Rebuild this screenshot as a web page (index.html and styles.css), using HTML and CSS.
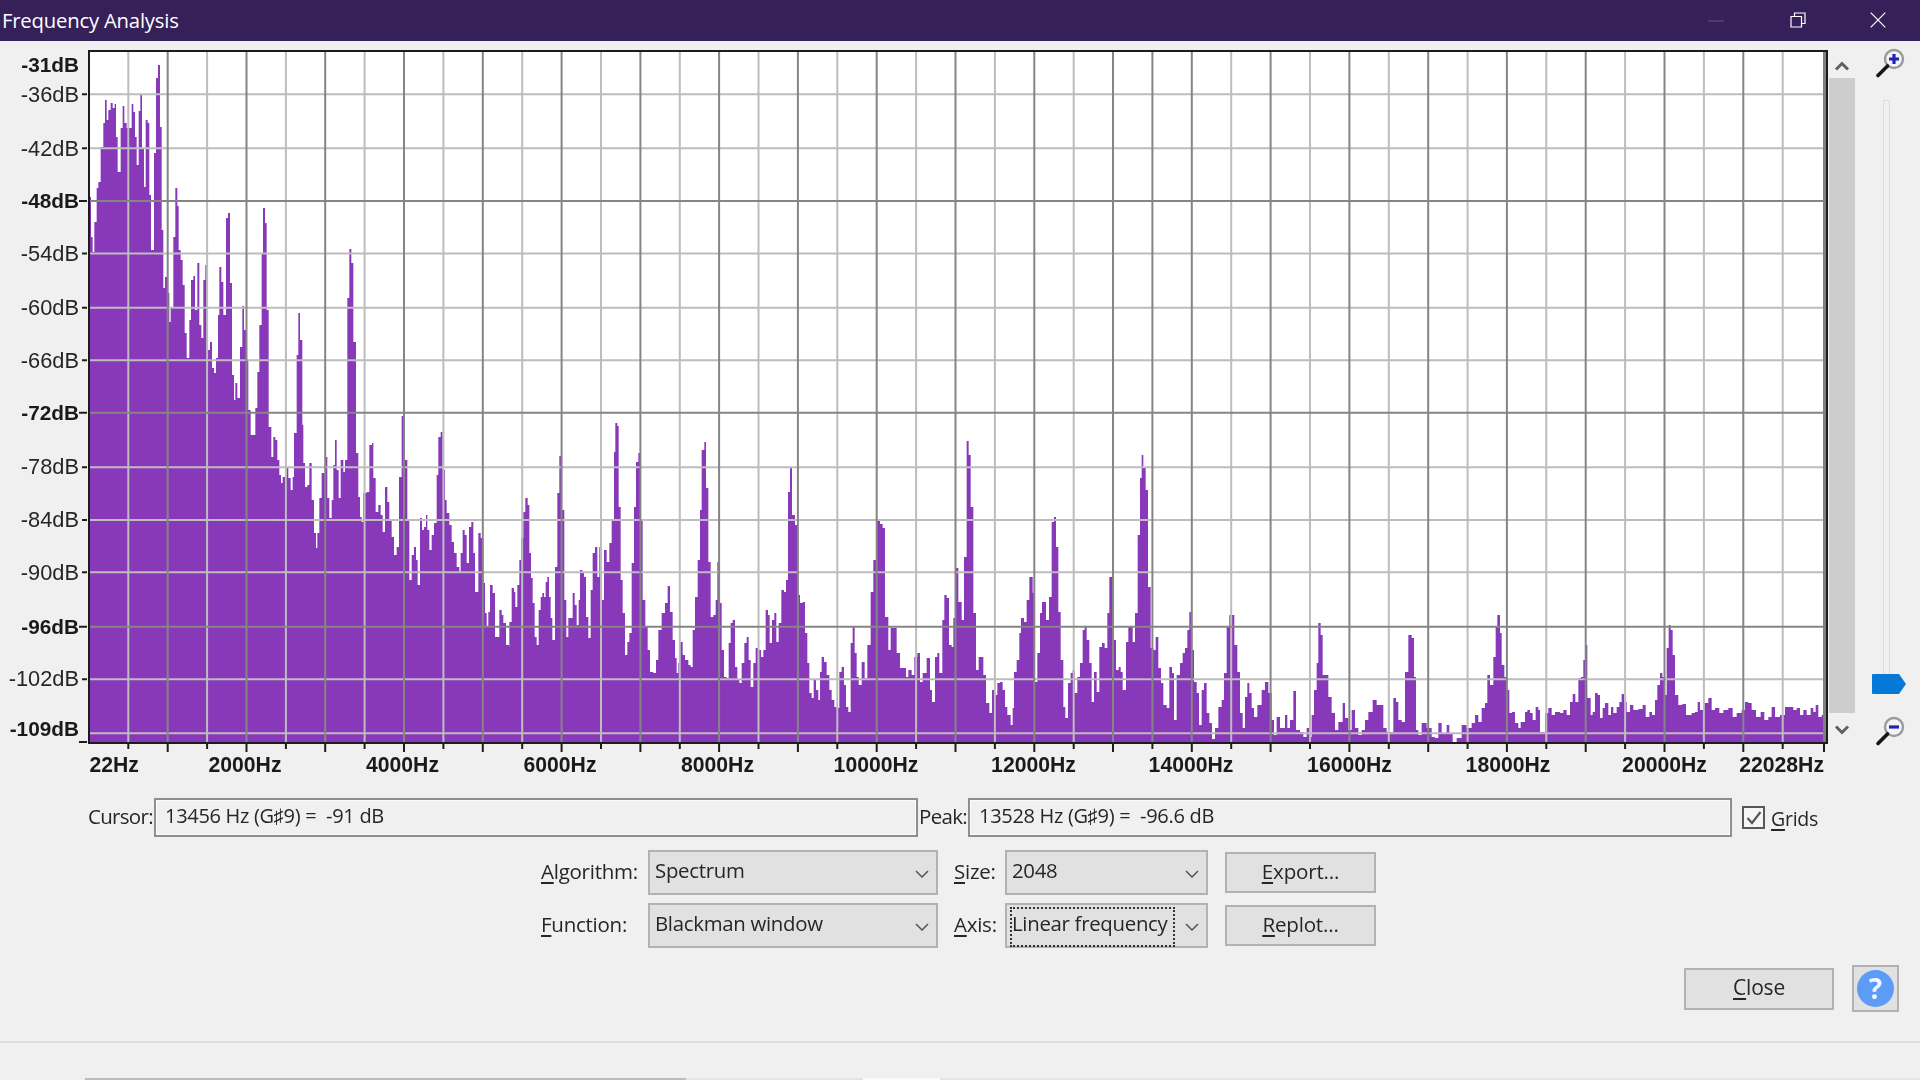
FILE: index.html
```html
<!DOCTYPE html>
<html lang="en">
<head>
<meta charset="utf-8">
<title>Frequency Analysis</title>
<link rel="stylesheet" href="styles.css">
</head>
<body>
<div class="window">
  <header class="titlebar">
    <span class="title">Frequency Analysis</span>
    <div class="winbtns">
      <svg class="wb-min" width="16" height="2" viewBox="0 0 16 2"><path d="M0 1H16" stroke="#5f4c82" stroke-width="1.2"/></svg>
      <svg class="wb-max" width="16" height="16" viewBox="0 0 16 16"><path d="M1 4.5H11.5V15H1ZM4.5 4.5V1H15V11.5H11.5" fill="none" stroke="#fff" stroke-width="1.2"/></svg>
      <svg class="wb-close" width="16" height="16" viewBox="0 0 16 16"><path d="M.7.7L15.3 15.3M15.3.7L.7 15.3" fill="none" stroke="#fff" stroke-width="1.2"/></svg>
    </div>
  </header>

  <section class="chart-row">
    <svg class="plot" width="1828" height="757" viewBox="0 41 1828 757">
      <rect x="89" y="51" width="1737" height="692" fill="#fff"/>
      <g class="spectrum">
        <path transform="translate(80 0) scale(.33333 1)" d="M25 743V197H33V237H38V252H43V222H50V188H55V182H62V147H70V123H75V100H80V120H85V110H92V103H98V108H104V104H108V137H113V172H122V128H128V106H133V123H140V128H155V104H160V112H165V137H170V165H176V111H181V95H186V148H192V187H197V120H203V123H208V195H213V250H222V153H228V78H234V65H240V127H245V230H250V288H255V277H262V293H268V322H272V307H280V237H286V188H292V206H296V250H302V260H308V285H314V333H320V358H328V320H333V280H340V276H345V310H352V263H358V325H364V338H370V280H376V265H381V350H390V342H396V368H402V373H408V358H414V315H418V267H424V282H430V315H438V218H444V213H450V283H456V375H462V400H466V383H472V398H480V347H487V306H492V330H498V360H505V410H512V435H526V408H532V372H538V325H545V253H549V208H555V223H560V310H566V427H574V457H580V437H586V440H592V743Z"/>
        <path transform="translate(270 0) scale(.33333 1)" d="M20 743V460H28V475H33V483H38V477H45V475H50V468H55V478H62V490H68V477H72V433H80V355H85V313H90V340H97V425H100V463H105V487H112V485H118V463H125V500H132V533H138V548H142V533H148V498H155V473H165V457H172V498H178V518H185V500H190V465H195V440H200V470H206V498H212V460H220V472H225V460H232V298H238V249H244V263H250V342H258V453H265V497H270V517H275V522H280V493H290V492H298V445H306V443H310V478H317V512H325V505H332V515H338V532H345V487H352V502H358V520H365V537H372V555H380V547H387V477H395V416H405V460H412V520H418V580H425V555H432V547H438V560H443V585H450V518H456V530H462V527H468V515H472V530H478V550H485V535H492V523H500V475H505V437H512V432H518V470H525V500H530V513H538V525H545V542H552V553H560V567H568V572H572V553H578V530H584V535H590V563H597V527H604V522H610V553H615V592H625V533H632V538H640V583H645V613H650V627H655V612H660V585H668V593H675V637H688V610H695V615H700V623H708V645H718V647H722V743Z"/>
        <path transform="translate(500 0) scale(.33333 1)" d="M28 743V622H35V588H42V592H46V607H52V585H58V560H63V538H70V512H76V498H83V505H88V553H93V578H98V603H104V637H110V645H116V610H122V597H127V593H132V597H137V582H142V577H147V597H152V618H157V640H165V567H172V493H178V456H186V510H193V600H199V637H205V618H218V593H224V605H230V625H236V600H240V570H247V572H252V577H258V617H265V638H272V590H278V553H285V547H292V577H298V547H305V600H312V550H320V562H328V543H335V520H342V452H346V423H352V426H356V507H362V580H368V613H375V655H382V642H388V633H395V563H402V507H408V462H415V453H420V520H428V600H436V627H443V650H450V672H460V673H468V660H475V630H485V613H495V603H503V586H510V612H518V640H525V658H530V673H535V663H540V642H548V655H555V660H565V665H572V667H578V630H585V597H593V560H600V510H605V450H613V442H618V488H625V562H632V617H640V615H647V600H652V562H660V603H665V650H672V677H680V678H686V643H692V623H698V620H705V667H712V680H718V683H725V663H733V643H740V637H746V660H752V687H760V663H767V648H775V650H783V657H790V650H797V610H804V615H809V643H816V620H823V613H829V642H836V623H844V590H852V592H858V580H864V492H870V468H876V515H885V525H893V595H900V603H908V602H915V633H922V663H928V693H935V698H941V680H948V690H955V700H960V672H965V657H972V662H980V675H988V690H995V700H1003V707H1010V708H1018V672H1025V667H1032V685H1038V707H1045V712H1052V643H1058V627H1064V653H1070V677H1076V685H1085V662H1094V678H1102V645H1112V592H1120V560H1130V520H1140V524H1148V528H1155V617H1165V650H1172V628H1180V628H1190V653H1200V668H1218V677H1225V670H1235V675H1243V657H1252V653H1260V682H1268V673H1280V658H1290V690H1296V702H1305V657H1312V653H1318V673H1327V620H1333V595H1340V598H1347V645H1355V647H1360V618H1367V568H1375V602H1385V620H1392V557H1400V441H1406V455H1412V507H1420V613H1428V670H1436V657H1450V675H1458V703H1468V713H1476V690H1485V695H1492V683H1500V743Z"/>
        <path transform="translate(1000 0) scale(.33333 1)" d="M0 743V682H8V690H15V707H22V715H32V725H38V708H42V672H50V660H58V633H63V618H72V622H80V600H88V577H98V593H105V682H112V653H120V613H126V602H138V620H147V597H155V522H162V517H168V547H175V612H182V660H190V707H196V718H204V683H212V673H218V670H224V693H232V677H240V663H248V630H254V627H260V640H268V663H275V702H282V672H290V692H298V647H306V643H314V648H322V613H328V577H340V640H348V670H356V667H362V672H368V690H378V642H385V627H398V642H405V613H413V535H420V478H425V455H430V468H437V490H444V587H452V648H460V650H467V637H475V668H483V683H490V705H500V708H508V667H516V673H522V720H530V675H540V663H548V653H555V648H562V630H568V612H575V650H582V682H590V693H597V725H605V690H612V683H620V713H628V723H636V739H645V728H655V707H665V700H672V673H680V627H688V615H703V645H712V672H720V713H728V728H735V697H742V683H748V693H755V708H762V717H772V705H785V690H795V682H805V693H815V720H822V735H830V717H840V728H855V715H862V728H870V720H880V691H888V730H900V732H910V737H920V728H928V737H935V715H942V690H950V663H955V623H962V635H968V675H985V697H995V713H1005V730H1015V722H1028V703H1035V718H1045V730H1055V710H1065V728H1075V735H1085V730H1095V720H1105V712H1118V700H1130V705H1150V728H1160V732H1180V698H1188V702H1195V720H1205V722H1215V672H1225V635H1235V638H1242V677H1248V730H1255V735H1265V723H1280V728H1295V737H1305V738H1315V723H1325V733H1340V725H1348V733H1358V742H1370V738H1385V725H1400V728H1415V723H1425V715H1435V722H1445V708H1455V703H1462V675H1470V685H1480V657H1487V627H1492V615H1500V743Z"/>
        <path transform="translate(1450 0) scale(.33333 1)" d="M148 743V633H155V665H163V677H170V690H178V713H186V712H195V723H205V728H212V722H225V712H232V710H240V713H248V720H257V707H265V710H270V732H285V713H295V708H305V715H315V712H330V713H340V710H350V715H360V702H368V694H376V702H385V678H393V677H400V660H405V645H412V698H422V715H428V712H435V693H443V695H450V718H458V708H465V703H475V715H483V707H490V713H500V707H508V702H515V694H522V702H530V712H540V705H550V710H565V709H578V705H587V717H598V712H606V715H615V700H622V685H630V673H637V677H643V695H650V648H656V625H662V630H668V655H675V695H685V705H697V704H708V715H725V713H735V712H743V702H750V710H762V703H775V698H785V710H795V708H808V713H820V710H835V708H848V717H860V713H875V710H885V702H895V703H905V710H918V717H932V712H943V720H955V717H965V707H975V717H990V715H1005V707H1030V710H1040V708H1050V715H1060V710H1070V715H1082V708H1090V712H1097V705H1105V717H1115V715H1119V743Z"/>
      </g>
      <path class="grid-light" d="M128.3 51V743M207.1 51V743M285.9 51V743M364.6 51V743M443.4 51V743M522.2 51V743M601 51V743M679.8 51V743M758.5 51V743M837.3 51V743M916.1 51V743M994.9 51V743M1073.7 51V743M1231.2 51V743M1310 51V743M1388.8 51V743M1467.6 51V743M1546.3 51V743M1625.1 51V743M1703.9 51V743M1782.7 51V743M89 94.3H1824M89 148.3H1824M89 253.5H1824M89 307.7H1824M89 360.3H1824M89 467.3H1824M89 520H1824M89 572.3H1824M89 679.3H1824M89 733.3H1824"/>
      <path class="grid-dark" d="M167.7 51V743M246.5 51V743M325.2 51V743M404 51V743M482.8 51V743M561.6 51V743M640.4 51V743M719.1 51V743M797.9 51V743M876.7 51V743M955.5 51V743M1034.3 51V743M1113 51V743M1152.4 51V743M1191.8 51V743M1270.6 51V743M1349.4 51V743M1428.2 51V743M1506.9 51V743M1585.7 51V743M1664.5 51V743M1743.3 51V743M89 201H1824M89 412.7H1824M89 626.7H1824"/>
      <path class="plot-frame" d="M89 51H1827V743H89Z"/>
      <path class="plot-edge" d="M1824.5 52V742"/>
      <path class="ticks" d="M82 94.3H87M82 148.3H87M79 201H87M82 253.5H87M82 307.7H87M82 360.3H87M79 412.7H87M82 467.3H87M82 520H87M82 572.3H87M79 626.7H87M82 679.3H87M79 742H87M128.3 744V749M167.7 744V752M207.1 744V749M246.5 744V752M285.9 744V749M325.2 744V752M364.6 744V749M404 744V752M443.4 744V749M482.8 744V752M522.2 744V749M561.6 744V752M601 744V749M640.4 744V752M679.8 744V749M719.1 744V752M758.5 744V749M797.9 744V752M837.3 744V749M876.7 744V752M916.1 744V749M955.5 744V752M994.9 744V749M1034.3 744V752M1073.7 744V749M1113 744V752M1152.4 744V749M1191.8 744V752M1231.2 744V749M1270.6 744V752M1310 744V749M1349.4 744V752M1388.8 744V749M1428.2 744V752M1467.6 744V749M1506.9 744V752M1546.3 744V749M1585.7 744V752M1625.1 744V749M1664.5 744V752M1703.9 744V749M1743.3 744V752M1782.7 744V749M1824 744V752"/>
      <g class="ylabels">
        <text class="b" x="79" y="71.5">-31dB</text>
        <text x="79" y="101.5">-36dB</text>
        <text x="79" y="156">-42dB</text>
        <text class="b" x="79" y="208">-48dB</text>
        <text x="79" y="260.5">-54dB</text>
        <text x="79" y="314.5">-60dB</text>
        <text x="79" y="367.5">-66dB</text>
        <text class="b" x="79" y="420">-72dB</text>
        <text x="79" y="474">-78dB</text>
        <text x="79" y="527">-84dB</text>
        <text x="79" y="579.5">-90dB</text>
        <text class="b" x="79" y="634">-96dB</text>
        <text x="79" y="686">-102dB</text>
        <text class="b" x="79" y="735.5">-109dB</text>
      </g>
      <g class="xlabels">
        <text class="start" x="89.5" y="772">22Hz</text>
        <text x="245" y="772">2000Hz</text>
        <text x="402.5" y="772">4000Hz</text>
        <text x="560" y="772">6000Hz</text>
        <text x="717.5" y="772">8000Hz</text>
        <text x="876" y="772">10000Hz</text>
        <text x="1033.5" y="772">12000Hz</text>
        <text x="1191" y="772">14000Hz</text>
        <text x="1349.5" y="772">16000Hz</text>
        <text x="1508" y="772">18000Hz</text>
        <text x="1664.5" y="772">20000Hz</text>
        <text class="end" x="1824" y="772">22028Hz</text>
      </g>
    </svg>

    <div class="vscroll">
      <svg class="chev-up" width="16" height="10" viewBox="0 0 16 10"><path d="M2 8.5L8 2.5L14 8.5" fill="none" stroke="#606060" stroke-width="3"/></svg>
      <div class="vscroll-thumb"></div>
      <svg class="chev-down" width="16" height="10" viewBox="0 0 16 10"><path d="M2 1.5L8 7.5L14 1.5" fill="none" stroke="#606060" stroke-width="3"/></svg>
    </div>

    <div class="zoom-col">
      <svg class="zoom-ic zoom-in" width="34" height="32" viewBox="0 0 34 32">
        <circle cx="21" cy="12" r="9" fill="#f4f4f4" stroke="#9a9a9a" stroke-width="2.4"/>
        <path d="M14.5 19L5 28.5" stroke="#151515" stroke-width="3.6" stroke-linecap="round"/>
        <path d="M21 7V17M16 12H26" stroke="#2222b4" stroke-width="3.2"/>
      </svg>
      <div class="slider">
        <div class="slider-track"></div>
        <svg class="slider-thumb" width="34" height="20" viewBox="0 0 34 20"><path d="M0 1Q0 0 1 0H27L34 10L27 20H1Q0 20 0 19Z" fill="#0678d8"/></svg>
      </div>
      <svg class="zoom-ic zoom-out" width="34" height="32" viewBox="0 0 34 32">
        <circle cx="21" cy="12" r="9" fill="#f4f4f4" stroke="#9a9a9a" stroke-width="2.4"/>
        <path d="M14.5 19L5 28.5" stroke="#151515" stroke-width="3.6" stroke-linecap="round"/>
        <path d="M16 12H26" stroke="#2222b4" stroke-width="3.2"/>
      </svg>
    </div>
  </section>

  <section class="readouts">
    <label class="lbl lbl-cursor">Cursor:</label>
    <div class="readout">13456 Hz (G♯9) =&nbsp; -91 dB</div>
    <label class="lbl lbl-peak">Peak:</label>
    <div class="readout">13528 Hz (G♯9) =&nbsp; -96.6 dB</div>
    <span class="check"><svg width="18" height="18" viewBox="0 0 18 18"><path d="M2.5 9L7 14L15.5 3" fill="none" stroke="#555" stroke-width="2.2"/></svg></span>
    <label class="lbl lbl-grids"><u>G</u>rids</label>
  </section>

  <section class="options">
    <label class="lbl"><u>A</u>lgorithm:</label>
    <div class="select"><span class="sel-text">Spectrum</span><svg class="chev" width="14" height="8" viewBox="0 0 14 8"><path d="M1 1L7 7L13 1" fill="none" stroke="#555" stroke-width="1.5"/></svg></div>
    <label class="lbl lbl-right"><u>S</u>ize:</label>
    <div class="select"><span class="sel-text">2048</span><svg class="chev" width="14" height="8" viewBox="0 0 14 8"><path d="M1 1L7 7L13 1" fill="none" stroke="#555" stroke-width="1.5"/></svg></div>
    <button class="btn btn-opt"><u>E</u>xport...</button>

    <label class="lbl"><u>F</u>unction:</label>
    <div class="select"><span class="sel-text">Blackman window</span><svg class="chev" width="14" height="8" viewBox="0 0 14 8"><path d="M1 1L7 7L13 1" fill="none" stroke="#555" stroke-width="1.5"/></svg></div>
    <label class="lbl lbl-right"><u>A</u>xis:</label>
    <div class="select select-focus"><span class="sel-text">Linear frequency</span><svg class="chev" width="14" height="8" viewBox="0 0 14 8"><path d="M1 1L7 7L13 1" fill="none" stroke="#555" stroke-width="1.5"/></svg></div>
    <button class="btn btn-opt"><u>R</u>eplot...</button>
  </section>

  <section class="footer">
    <button class="btn btn-close"><u>C</u>lose</button>
    <button class="btn-help"><span class="help-dot">?</span></button>
  </section>

  <div class="statusbar"></div>
  <div class="taskstrip">
    <span class="ts ts-a"></span><span class="ts ts-b"></span><span class="ts ts-c"></span><span class="ts ts-d"></span><span class="ts ts-e"></span>
  </div>
</div>
</body>
</html>
```

FILE: styles.css
```css
* { box-sizing: border-box; }
html, body { margin: 0; padding: 0; }
body {
  width: 1920px;
  height: 1080px;
  overflow: hidden;
  background: #f0f0f0;
  font-family: "Open Sans", "Noto Sans", sans-serif;
  color: #262626;
}
.window { display: flex; flex-direction: column; width: 1920px; height: 1080px; filter: blur(.4px); }

.titlebar {
  height: 41px;
  flex: none;
  background: #35205a;
  display: flex;
  align-items: center;
  justify-content: space-between;
  color: #fff;
}
.title { padding-left: 2px; font-size: 20.3px; letter-spacing: -.2px; line-height: 41px; }
.winbtns { display: flex; align-items: center; }
.wb-min { margin-right: 66px; }
.wb-max { margin-right: 64px; margin-top: -2px; }
.wb-close { margin-right: 34px; margin-top: -2px; }

.chart-row { display: flex; height: 757px; flex: none; }
.plot { flex: none; display: block; }
.spectrum path { fill: #8739ba; }
.grid-light { fill: none; stroke: #bdbdbd; stroke-width: 2; }
.grid-dark { fill: none; stroke: #858585; stroke-width: 2; }
.plot-frame { fill: none; stroke: #1c1c1c; stroke-width: 2; }
.plot-edge { fill: none; stroke: #808080; stroke-width: 3; }
.ticks { fill: none; stroke: #1c1c1c; stroke-width: 2; }
.ylabels text { font: 21.8px "Liberation Sans", sans-serif; fill: #262626; text-anchor: end; }
.ylabels .b { font-size: 20.8px; font-weight: 700; fill: #1a1a1a; }
.xlabels text { font: 700 21.2px "Liberation Sans", sans-serif; fill: #1a1a1a; text-anchor: middle; }
.xlabels .start { text-anchor: start; }
.xlabels .end { text-anchor: end; }

.vscroll { width: 26px; margin-left: 1px; flex: none; display: flex; flex-direction: column; align-items: center; }
.chev-up { margin-top: 20px; margin-bottom: 7px; flex: none; }
.vscroll-thumb { width: 26px; height: 635px; background: #cdcdcd; flex: none; }
.chev-down { margin-top: 12px; flex: none; }

.zoom-col { width: 65px; flex: none; display: flex; flex-direction: column; padding-left: 21px; }
.zoom-ic { display: block; flex: none; margin-left: -3px; }
.zoom-in { margin-top: 6px; }
.slider { position: relative; height: 623px; margin-top: 21px; flex: none; width: 34px; }
.slider-track { position: absolute; left: 7px; top: 0; width: 7px; height: 590px; background: #f0f0f0; border: 1px solid #dcdcdc; }
.slider-thumb { display: block; position: absolute; left: -4px; top: 574px; }
.zoom-out { margin-top: -8px; }

.lbl { font-size: 20.5px; letter-spacing: -.25px; white-space: nowrap; padding-bottom: 3px; }
u { text-underline-offset: 3px; text-decoration-thickness: 1.5px; }

.readouts { display: flex; align-items: center; height: 39px; padding-left: 88px; flex: none; }
.lbl-cursor { width: 66px; letter-spacing: -.7px; padding-bottom: 4px; }
.lbl-peak { width: 50px; padding-left: 1px; letter-spacing: -.7px; padding-bottom: 4px; }
.readout {
  width: 764px;
  height: 39px;
  border: 2px solid #8e8e8e;
  background: #f0f0f0;
  box-shadow: inset 0 0 0 1px #fbfbfb;
  font-size: 20px;
  letter-spacing: -.3px;
  line-height: 31px;
  padding-left: 9px;
  white-space: nowrap;
}
.check {
  width: 23px;
  height: 23px;
  margin-left: 10px;
  margin-right: 6px;
  border: 2px solid #575757;
  background: #f5f5f5;
  display: flex;
  align-items: center;
  justify-content: center;
}
.lbl-grids { font-size: 19.5px; padding: 1px 0 0; }

.options {
  display: grid;
  grid-template-columns: 107px 290px 67px 203px 168px;
  grid-template-rows: 45px 45px;
  row-gap: 8px;
  margin-top: 13px;
  padding-left: 541px;
  align-items: center;
  flex: none;
}
.lbl-right { padding-left: 16px; }
.select {
  height: 45px;
  border: 2px solid #b2b2b2;
  background: #e1e1e1;
  position: relative;
  display: flex;
  align-items: center;
  padding-left: 5px;
}
.sel-text { font-size: 20.4px; letter-spacing: -.3px; margin-top: -6px; white-space: nowrap; position: relative; z-index: 1; }
.chev { position: absolute; right: 7px; top: 18px; }
.select-focus .sel-text { padding: 0; }
.select-focus::before {
  content: "";
  position: absolute;
  left: 3px;
  top: 2px;
  width: 161px;
  height: 36px;
  border: 2px dotted #333;
}
.btn {
  border: 2px solid #b2b2b2;
  background: #e1e1e1;
  font-family: inherit;
  color: inherit;
  font-size: 20.6px;
  letter-spacing: -.2px;
  padding: 0 0 3px;
  display: block;
}
.btn-opt { width: 151px; height: 41px; margin-left: 17px; }

.footer {
  display: flex;
  justify-content: flex-end;
  align-items: center;
  gap: 18px;
  height: 47px;
  margin-top: 17px;
  padding-right: 21px;
  flex: none;
}
.btn-close { width: 150px; height: 42px; font-size: 21px; padding-bottom: 4px; }
.btn-help {
  width: 47px;
  height: 47px;
  padding: 0;
  border: 2px solid #b2b2b2;
  background: #e1e1e1;
  display: flex;
  align-items: center;
  justify-content: center;
}
.help-dot {
  width: 37px;
  height: 37px;
  border-radius: 50%;
  background: #5c9bf6;
  color: #f4f7fd;
  font: 700 28px/37px "Open Sans", sans-serif;
  text-align: center;
}

.statusbar { flex: 1; margin-top: 29px; border-top: 2px solid #dedede; }
.taskstrip { height: 2px; display: flex; flex: none; }
.ts { display: block; height: 2px; }
.ts-a { width: 85px; background: #f0f0f0; }
.ts-b { width: 601px; background: #bcbcbc; }
.ts-c { width: 177px; background: #e4e4e4; }
.ts-d { width: 77px; background: #fafafa; }
.ts-e { flex: 1; background: #e4e4e4; }
```
